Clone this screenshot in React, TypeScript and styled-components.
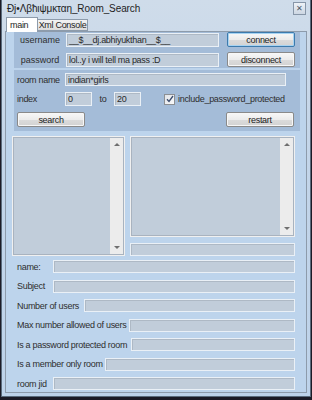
import styled, { createGlobalStyle } from "styled-components";

const GlobalStyle = createGlobalStyle`
  html, body {
    margin: 0;
    padding: 0;
    background: #1c1b26;
  }
  body {
    font-family: "Liberation Sans", Arial, sans-serif;
    font-size: 9px;
    letter-spacing: -0.3px;
    color: #2e2e2e;
  }
`;

const Frame = styled.div`
  width: 310px;
  height: 397px;
  margin-left: 1px;
  border: 1px solid #5a6b7c;
  border-top: none;
  box-sizing: border-box;
  background: linear-gradient(180deg, #cfdcea 0%, #c3d5e9 40%, #bed3ea 100%);
  display: flex;
  flex-direction: column;
  padding: 0 3px 4px 3px;
`;

const TitleBar = styled.div`
  height: 17px;
  display: flex;
  align-items: center;
  justify-content: space-between;
  padding-left: 2px;
  flex-shrink: 0;
`;

const Title = styled.span`
  font-size: 10px;
  letter-spacing: -0.1px;
  color: #1e1e1e;
`;

const CloseBox = styled.div`
  width: 11px;
  height: 11px;
  margin-right: 1px;
  border: 1px solid #8796a8;
  background: linear-gradient(180deg, #eef2f7, #cdd7e3);
  display: flex;
  align-items: center;
  justify-content: center;
  font-size: 8px;
  line-height: 1;
  color: #4a5564;
`;

const TabStrip = styled.div`
  height: 14px;
  display: flex;
  align-items: flex-end;
  flex-shrink: 0;
  position: relative;
  z-index: 1;
  padding-left: 1px;
`;

const Tab = styled.div<{ $active?: boolean }>`
  box-sizing: border-box;
  height: ${(p) => (p.$active ? "15px" : "12px")};
  margin-bottom: ${(p) => (p.$active ? "-1px" : "0")};
  padding: 0 ${(p) => (p.$active ? "3px" : "2px")};
  border: 1px solid #8d9bab;
  border-bottom: ${(p) => (p.$active ? "none" : "1px solid #8d9bab")};
  margin-left: ${(p) => (p.$active ? "0" : "-1px")};
  background: ${(p) =>
    p.$active ? "#ffffff" : "linear-gradient(180deg, #f3f3f3, #dcdcdc)"};
  display: flex;
  align-items: center;
  justify-content: ${(p) => (p.$active ? "flex-start" : "center")};
  color: #1e1e1e;
  width: ${(p) => (p.$active ? "32px" : "51px")};
  white-space: nowrap;
`;

const TabPage = styled.div`
  flex: 1;
  border: 1px solid #8d9bab;
  background: #bdd4ec;
  display: flex;
  flex-direction: column;
  padding-bottom: 2px;
`;

const Panel = styled.div<{ $h: number; $top?: number }>`
  height: ${(p) => p.$h}px;
  margin: ${(p) => p.$top ?? 0}px 6px 0 8px;
  background: #a4bcd8;
  box-sizing: border-box;
  flex-shrink: 0;
`;

const AccountGrid = styled.div`
  display: grid;
  grid-template-columns: 52px 153px 76px;
  row-gap: 5px;
  align-items: center;
  justify-items: stretch;
`;

const CenterLabel = styled.span`
  text-align: center;
  white-space: nowrap;
  letter-spacing: 0;
`;

const TextBox = styled.div<{ $w?: number; $h?: number }>`
  box-sizing: border-box;
  width: ${(p) => (p.$w ? `${p.$w}px` : "auto")};
  flex: ${(p) => (p.$w ? "0 0 auto" : "1")};
  height: ${(p) => p.$h ?? 14}px;
  background: #c1cdda;
  border: 1px solid #eaf0f6;
  box-shadow: inset 1px 1px 0 #aeb9c5;
  padding: 0 2px;
  display: flex;
  align-items: center;
  color: #2a2a2a;
  white-space: nowrap;
  overflow: hidden;
`;

const Button = styled.div<{ $focus?: boolean }>`
  box-sizing: border-box;
  width: 68px;
  height: 15px;
  justify-self: end;
  border: 1px solid ${(p) => (p.$focus ? "#3d7bad" : "#8a8a8a")};
  border-radius: 2px;
  background: linear-gradient(180deg, #f7f7f7 0%, #ececec 50%, #dcdcdc 51%, #d2d2d2 100%);
  box-shadow: ${(p) => (p.$focus ? "inset 0 0 0 1px #a7d3f2" : "inset 0 0 0 1px #f7f7f7")};
  display: flex;
  align-items: center;
  justify-content: center;
  color: #222;
`;

const PanelBody = styled.div`
  display: flex;
  flex-direction: column;
  padding: 3px 0 0 3px;
`;

const Row = styled.div<{ $mt?: number; $spread?: boolean }>`
  display: flex;
  align-items: center;
  margin-top: ${(p) => p.$mt ?? 0}px;
  justify-content: ${(p) => (p.$spread ? "space-between" : "flex-start")};
  padding-right: ${(p) => (p.$spread ? "6px" : "0")};
`;

const Label = styled.span<{ $w: number; $center?: boolean }>`
  width: ${(p) => p.$w}px;
  flex-shrink: 0;
  white-space: nowrap;
  text-align: ${(p) => (p.$center ? "center" : "left")};
`;

const CheckBox = styled.div`
  box-sizing: border-box;
  width: 11px;
  height: 11px;
  margin-left: 23px;
  border: 1px solid #8c8f93;
  background: linear-gradient(135deg, #e0e3e8, #fafafa);
  display: flex;
  align-items: center;
  justify-content: center;
  margin-right: 3px;
`;

const ListsArea = styled.div`
  display: flex;
  margin: 5px 11px 0 6px;
  gap: 5px;
  height: 120px;
  flex-shrink: 0;
`;

const ListBox = styled.div<{ $w?: number; $h: number }>`
  box-sizing: border-box;
  width: ${(p) => (p.$w ? `${p.$w}px` : "100%")};
  height: ${(p) => p.$h}px;
  background: #c1cdda;
  border: 1px solid #f0f0f0;
  outline: 1px solid #a9b3bf;
  outline-offset: -2px;
  display: flex;
  justify-content: flex-end;
`;

const ScrollBar = styled.div`
  width: 13px;
  margin: 1px 1px 1px 0;
  background: #ececec;
  display: flex;
  flex-direction: column;
  justify-content: space-between;
  align-items: center;
  padding: 5px 0;
  box-sizing: border-box;
`;

const Arrow = styled.div<{ $up?: boolean }>`
  width: 0;
  height: 0;
  border-left: 3px solid transparent;
  border-right: 3px solid transparent;
  ${(p) =>
    p.$up ? "border-bottom: 3px solid #6f6f6f;" : "border-top: 3px solid #6f6f6f;"}
`;

const RightColumn = styled.div`
  flex: 1;
  display: flex;
  flex-direction: column;
  gap: 6px;
`;

const Fields = styled.div`
  display: flex;
  flex-direction: column;
  gap: 6.5px;
  padding: 4px 11px 0 11px;
`;

function List({ w, h }: { w?: number; h: number }) {
  return (
    <ListBox $w={w} $h={h}>
      <ScrollBar>
        <Arrow $up />
        <Arrow />
      </ScrollBar>
    </ListBox>
  );
}

const fields: { label: string; start: number }[] = [
  { label: "name:", start: 53 },
  { label: "Subject", start: 53 },
  { label: "Number of users", start: 84 },
  { label: "Max number allowed of users", start: 129 },
  { label: "Is a password protected room", start: 131 },
  { label: "Is a member only room", start: 105 },
  { label: "room jid", start: 53 },
];

export default function App() {
  return (
    <>
      <GlobalStyle />
      <Frame>
        <TitleBar>
          <Title>Ðj•Λβħιψμκταη_Room_Search</Title>
          <CloseBox>✕</CloseBox>
        </TitleBar>
        <TabStrip>
          <Tab $active>main</Tab>
          <Tab>Xml Console</Tab>
        </TabStrip>
        <TabPage>
          <Panel $h={36}>
            <AccountGrid>
              <CenterLabel>username</CenterLabel>
              <TextBox $h={14}>__$__dj.abhiyukthan__$__</TextBox>
              <Button $focus>connect</Button>
              <CenterLabel>password</CenterLabel>
              <TextBox $h={14}>lol..y i will tell ma pass :D</TextBox>
              <Button>disconnect</Button>
            </AccountGrid>
          </Panel>
          <Panel $h={61} $top={2}>
            <PanelBody>
              <Row>
                <Label $w={48}>room name</Label>
                <TextBox $w={221} $h={13}>indian*girls</TextBox>
              </Row>
              <Row $mt={6}>
                <Label $w={48}>index</Label>
                <TextBox $w={27}>0</TextBox>
                <Label $w={22} $center>to</Label>
                <TextBox $w={27}>20</TextBox>
                <CheckBox>
                  <svg width="8" height="8" viewBox="0 0 8 8">
                    <path d="M1 4.2 L3 6.4 L7 1" fill="none" stroke="#3b4d6e" strokeWidth="1.3" />
                  </svg>
                </CheckBox>
                <span>include_password_protected</span>
              </Row>
              <Row $mt={6} $spread>
                <Button>search</Button>
                <Button>restart</Button>
              </Row>
            </PanelBody>
          </Panel>
          <ListsArea>
            <List w={113} h={120} />
            <RightColumn>
              <List h={101} />
              <TextBox $h={13} />
            </RightColumn>
          </ListsArea>
          <Fields>
            {fields.map((f) => (
              <Row key={f.label}>
                <Label $w={f.start - 17}>{f.label}</Label>
                <TextBox $h={13} />
              </Row>
            ))}
          </Fields>
        </TabPage>
      </Frame>
    </>
  );
}
